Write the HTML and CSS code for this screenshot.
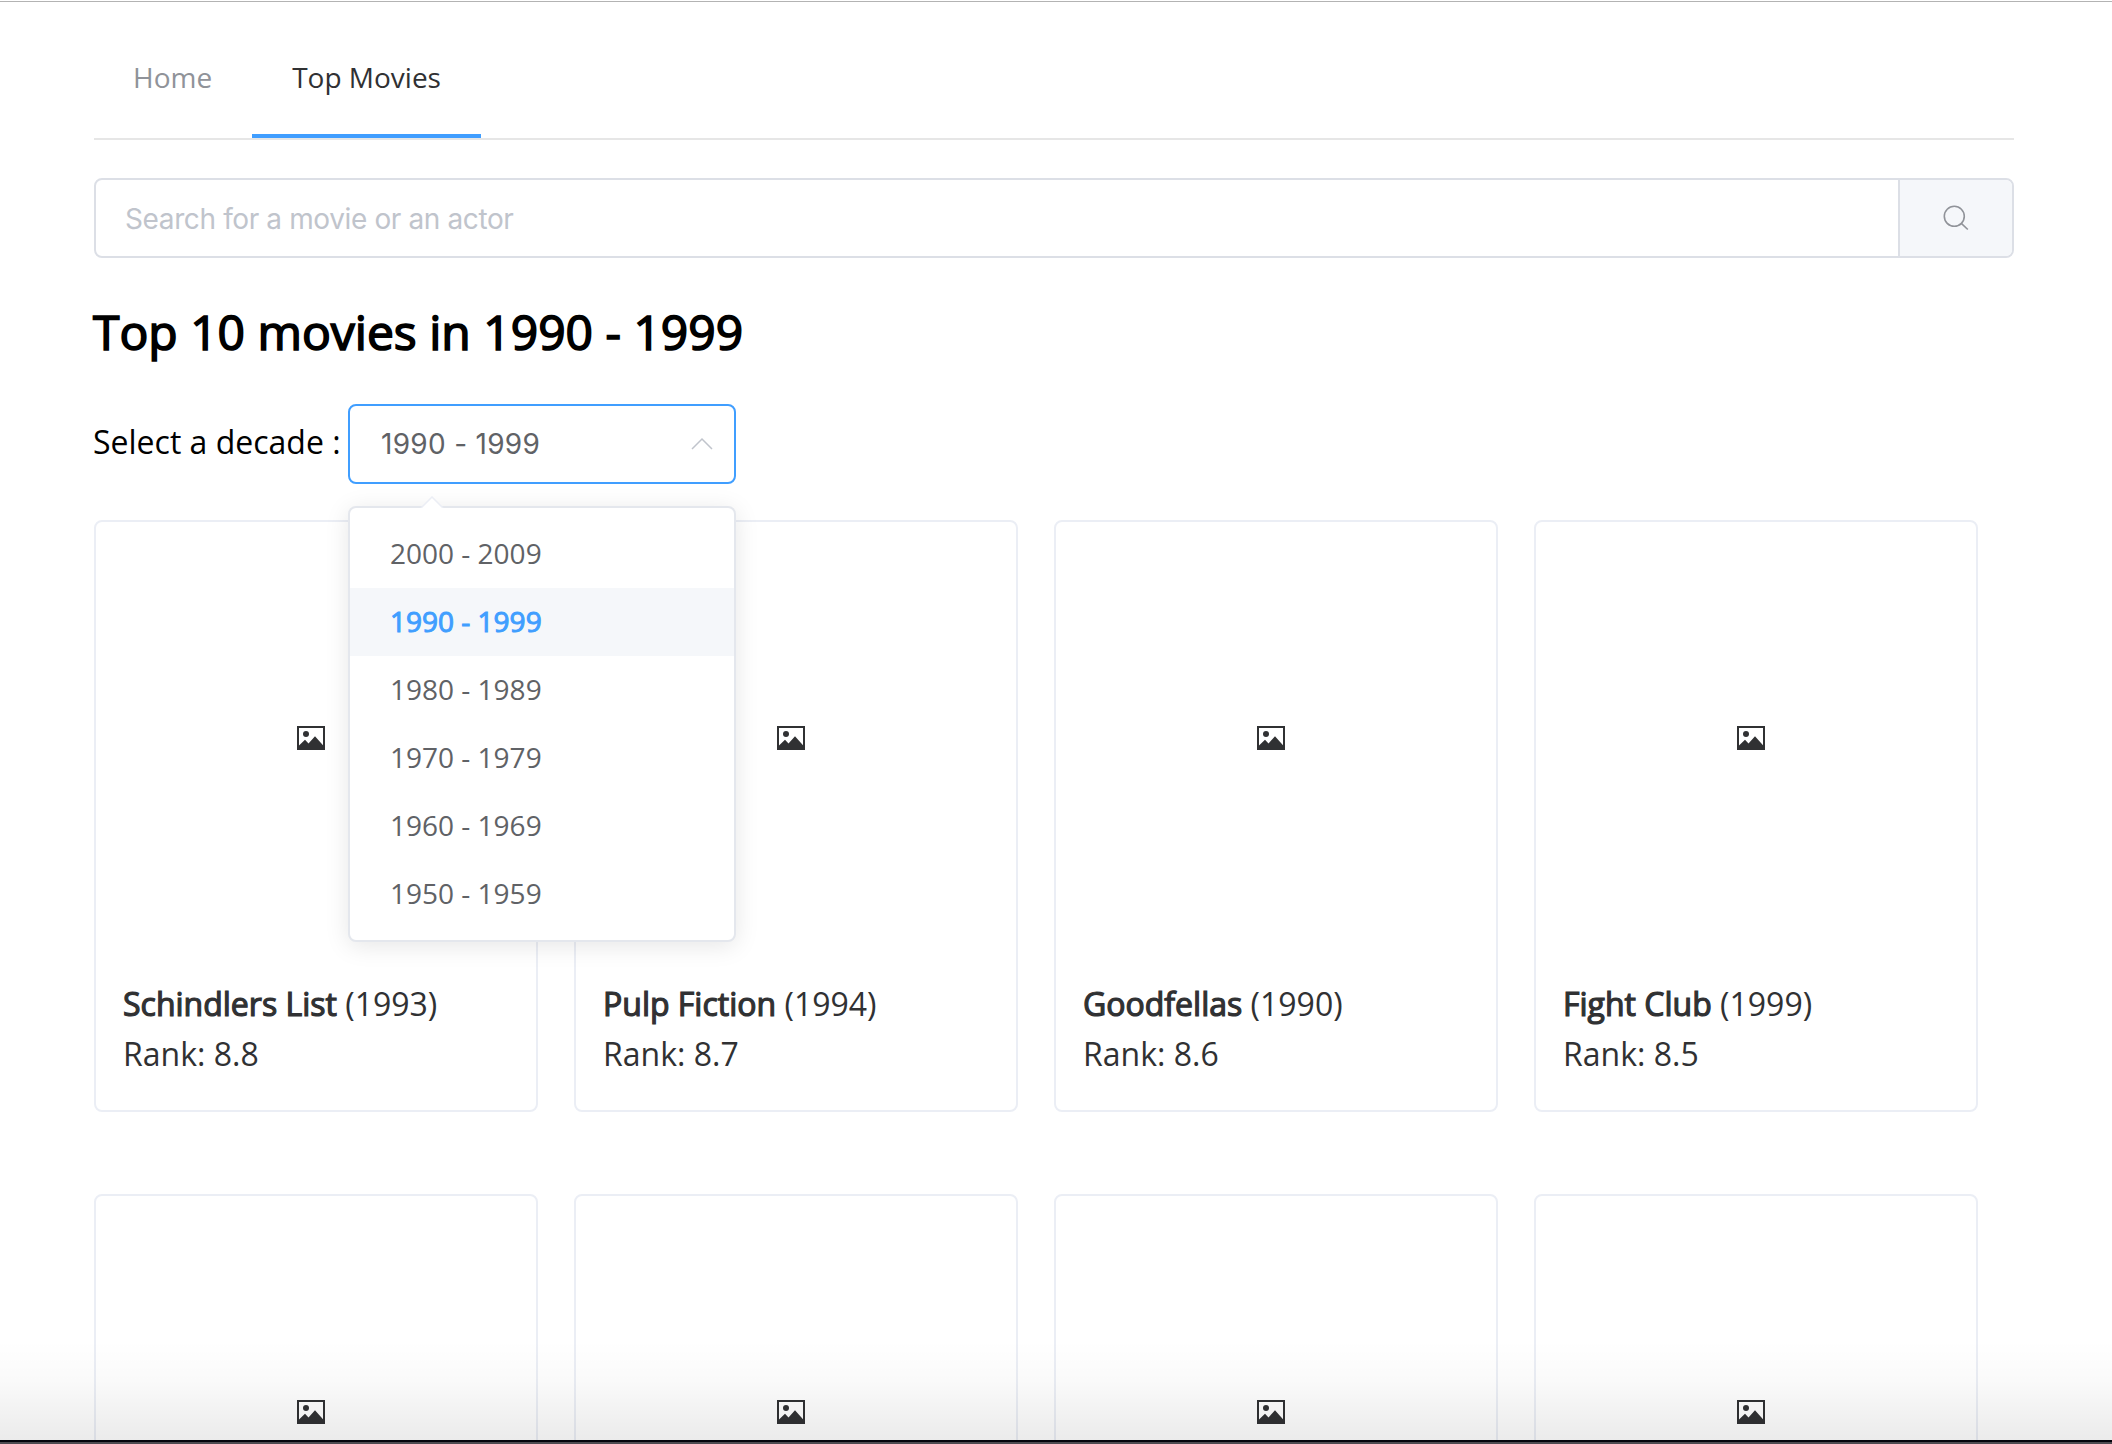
FILE: index.html
```html
<!DOCTYPE html>
<html lang="en">
<head>
<meta charset="utf-8">
<title>Top Movies</title>
<link rel="stylesheet" href="styles.css">
</head>
<body>
<svg class="sprite" aria-hidden="true">
  <symbol id="picture" viewBox="0 0 28 24">
    <path fill="currentColor" fill-rule="evenodd" d="M0 0h28v24H0zM2 2v17.600l6-5.800 3.500 3.700 6.500-7.200 8 8.900V2z"/>
    <circle cx="9" cy="8" r="3" fill="currentColor"/>
  </symbol>
</svg>
<div class="app">
  <nav class="tabs">
    <a class="tab">Home</a>
    <a class="tab tab-active">Top Movies</a>
  </nav>
  <div class="search">
    <div class="search-input">Search for a movie or an actor</div>
    <div class="search-button">
      <svg width="26" height="26" viewBox="0 0 26 26" fill="none" stroke="#909399" stroke-width="1.600"><circle cx="11.300" cy="11.300" r="10"/><path d="M18.300 18.300l6.500 6.200"/></svg>
    </div>
  </div>
  <h1 class="title">Top 10 movies in 1990 - 1999</h1>
  <div class="decade">
    <span class="decade-label">Select a decade :</span>
    <div class="select">
      <span class="select-value">1990 - 1999</span>
      <svg width="22" height="14" viewBox="0 0 22 14" fill="none" stroke="#c0c4cc" stroke-width="1.500"><path d="M1 12L11 2l10 10"/></svg>
      <div class="menu">
        <svg class="menu-arrow" width="24" height="12" viewBox="0 0 24 12"><path d="M1 12L12 1l11 11" fill="#fff" stroke="#ebeef5" stroke-width="1.500"/></svg>
        <div class="option">2000 - 2009</div>
        <div class="option option-selected">1990 - 1999</div>
        <div class="option">1980 - 1989</div>
        <div class="option">1970 - 1979</div>
        <div class="option">1960 - 1969</div>
        <div class="option">1950 - 1959</div>
      </div>
    </div>
  </div>
  <div class="movies">
    <article class="card"><div class="poster"><svg class="picture"><use href="#picture"/></svg></div><div><b class="name">Schindlers List</b> (1993)</div><div>Rank: 8.8</div></article>
    <article class="card"><div class="poster"><svg class="picture"><use href="#picture"/></svg></div><div><b class="name">Pulp Fiction</b> (1994)</div><div>Rank: 8.7</div></article>
    <article class="card"><div class="poster"><svg class="picture"><use href="#picture"/></svg></div><div><b class="name">Goodfellas</b> (1990)</div><div>Rank: 8.6</div></article>
    <article class="card"><div class="poster"><svg class="picture"><use href="#picture"/></svg></div><div><b class="name">Fight Club</b> (1999)</div><div>Rank: 8.5</div></article>
    <article class="card"><div class="poster"><svg class="picture"><use href="#picture"/></svg></div></article>
    <article class="card"><div class="poster"><svg class="picture"><use href="#picture"/></svg></div></article>
    <article class="card"><div class="poster"><svg class="picture"><use href="#picture"/></svg></div></article>
    <article class="card"><div class="poster"><svg class="picture"><use href="#picture"/></svg></div></article>
  </div>
  <div class="fade"></div>
</div>
</body>
</html>
```
FILE: styles.css
```css
* { box-sizing: border-box; }
body { margin: 0; background: #fff; font-family: "Open Sans", sans-serif; font-size: 32px; color: #000; }
.sprite { position: absolute; width: 0; height: 0; }
.app { position: relative; height: 1444px; overflow: hidden; padding: 16px 98px 0 94px; }
.app::before { content: ""; position: absolute; left: 0; right: 0; top: 1px; height: 1px; background: #b3b3b3; }
.tabs { display: flex; height: 124px; border-bottom: 2px solid #e6e6e6; font-size: 28px; line-height: 122px; }
.tab { padding: 0 40px 0 39px; height: 122px; color: #909399; }
.tab-active { padding: 0 40px; color: #303133; border-bottom: 4px solid #409eff; }
.search { display: flex; height: 80px; margin-top: 38px; border: 2px solid #dcdfe6; border-radius: 8px; overflow: hidden; }
.search-input { flex: 1; padding-left: 29px; font: 28px/78px Inter, sans-serif; letter-spacing: -.38px; color: #c0c4cc; }
.search-button { width: 114px; border-left: 2px solid #dcdfe6; background: #f5f7fa; display: flex; align-items: center; justify-content: center; }
.title { margin: 41px 0 0 -1px; height: 66px; line-height: 66px; font-size: 48px; font-weight: 400; -webkit-text-stroke: 1.600px currentColor; white-space: nowrap; }
.decade { display: flex; height: 80px; margin: 39px 0 36px -1px; line-height: 76px; }
.decade-label { width: 255px; white-space: nowrap; }
.select { position: relative; display: flex; align-items: center; justify-content: space-between; width: 388px; height: 80px; border: 2px solid #409eff; border-radius: 8px; padding: 0 21px 0 31px; color: #606266; }
.select-value { padding-top: 1px; font: 28px/77px Inter, sans-serif; letter-spacing: .3px; }
.menu { position: absolute; z-index: 2; left: -2px; top: 100px; width: 388px; padding: 12px 0; background: #fff; border: 2px solid #e4e7ed; border-radius: 8px; box-shadow: 0 4px 24px rgba(0,0,0,.1); font-size: 28px; line-height: 66px; }
.menu-arrow { position: absolute; left: 70px; top: -12px; }
.option { height: 68px; padding: 0 40px; }
.option-selected { background: #f5f7fa; color: #409eff; -webkit-text-stroke: 1px currentColor; }
.movies { display: grid; grid-template-columns: repeat(4, 444px); grid-auto-rows: 592px; gap: 82px 36px; }
.card { border: 2px solid #ebeef5; border-radius: 8px; padding: 28px 27px; color: #303133; line-height: 50px; }
.poster { width: 376px; height: 429px; padding: 176px 0 0 174px; line-height: 0; }
.picture { width: 28px; height: 24px; color: #303133; }
.name { font-weight: 400; -webkit-text-stroke: 1.200px currentColor; }
.fade { position: absolute; z-index: 3; left: 0; right: 0; top: 1340px; height: 104px; background: linear-gradient(rgba(0,0,0,0), rgba(0,0,0,.02) 40%, rgba(0,0,0,.08)) 0 0 / 100% 100px no-repeat; }
.fade::after { content: ""; position: absolute; left: 0; right: 0; bottom: 0; height: 2px; background: #4d4a50; border-top: 2px solid #04040c; }
```
